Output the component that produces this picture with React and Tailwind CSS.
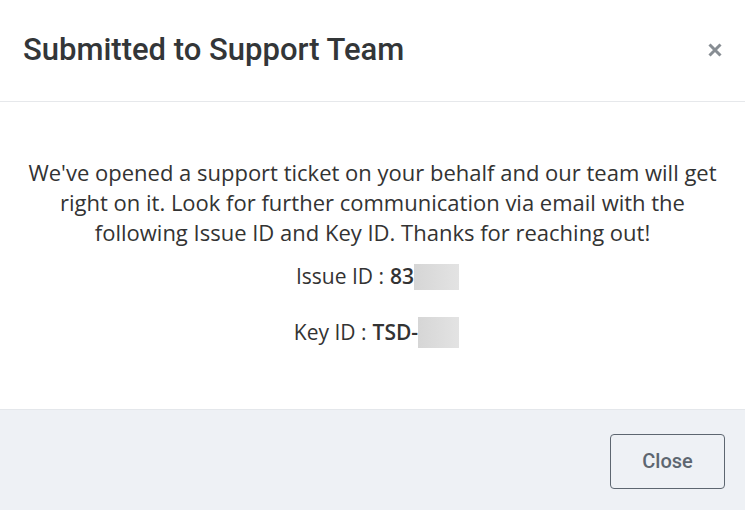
import React from 'react';

const App = () => {
    return (
        <div className="w-[745px] h-[510px] bg-white flex flex-col overflow-hidden">
            <div className="h-[102px] flex items-center justify-between pl-[23px] pr-[22px] border-b border-[#e6e8eb]">
                <h2 className="text-[31px] font-medium text-[#333638] font-['Roboto',sans-serif]">
                    Submitted to Support Team
                </h2>
                <button className="text-[#878d93] -mt-[2px]">
                    <svg width="16" height="16" viewBox="0 0 16 16">
                        <path d="M2.5 2.5 L13.5 13.5 M13.5 2.5 L2.5 13.5" stroke="currentColor" strokeWidth="3" />
                    </svg>
                </button>
            </div>

            <div className="flex-1 flex flex-col items-center pt-[55px] px-6 text-[#333] font-['Open_Sans',sans-serif] text-[21px]">
                <p className="text-center text-[22px] leading-[30px] w-[705px]">
                    We've opened a support ticket on your behalf and our team will get right on it. Look for further communication via email with the following Issue ID and Key ID. Thanks for reaching out!
                </p>
                <div className="mt-[17px] ml-[10px] flex items-center h-[26px]">
                    <span>Issue ID : </span>
                    <span className="font-semibold ml-[6px]">83</span>
                    <span className="inline-block w-[45px] h-[26px] bg-gradient-to-r from-[#d6d6d6] to-[#e3e3e3]" />
                </div>
                <div className="mt-[27px] ml-[8px] flex items-center h-[31px]">
                    <span>Key ID : </span>
                    <span className="font-semibold ml-[6px]">TSD-</span>
                    <span className="inline-block w-[41px] h-[31px] bg-gradient-to-r from-[#d6d6d6] to-[#e3e3e3]" />
                </div>
            </div>

            <div className="h-[101px] bg-[#eef1f5] border-t border-[#e4e7eb] flex items-center justify-end pr-[20px] pt-[2px]">
                <button className="w-[115px] h-[55px] rounded-[4px] border border-[#5d6670] text-[#5d6670] text-[20px] font-medium font-['Roboto',sans-serif]">
                    Close
                </button>
            </div>
        </div>
    );
};

export default App;
